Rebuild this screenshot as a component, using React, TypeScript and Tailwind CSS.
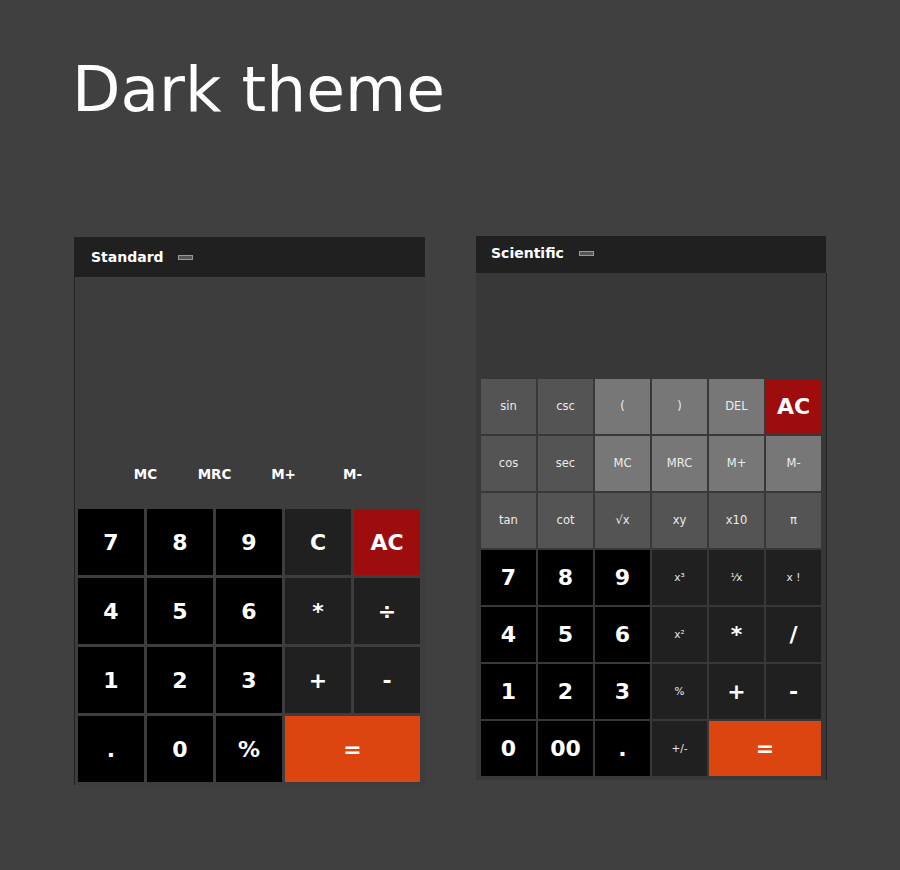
import React from "react";

const F = { fontFamily: '"DejaVu Sans", Verdana, sans-serif' };

function MinIcon() {
  return <span className="inline-block w-[15px] h-[5px] bg-[#555] border border-[#9a9a9a]" />;
}

type Btn = { t: string; c: string; k: "big" | "fn" | "sm"; span?: boolean };

function Standard() {
  const keys: Btn[] = [
    { t: "7", c: "bg-black", k: "big" },
    { t: "8", c: "bg-black", k: "big" },
    { t: "9", c: "bg-black", k: "big" },
    { t: "C", c: "bg-[#202020]", k: "big" },
    { t: "AC", c: "bg-[#9d0d0e]", k: "big" },
    { t: "4", c: "bg-black", k: "big" },
    { t: "5", c: "bg-black", k: "big" },
    { t: "6", c: "bg-black", k: "big" },
    { t: "*", c: "bg-[#202020]", k: "big" },
    { t: "÷", c: "bg-[#202020]", k: "big" },
    { t: "1", c: "bg-black", k: "big" },
    { t: "2", c: "bg-black", k: "big" },
    { t: "3", c: "bg-black", k: "big" },
    { t: "+", c: "bg-[#202020]", k: "big" },
    { t: "-", c: "bg-[#202020]", k: "big" },
    { t: ".", c: "bg-black", k: "big" },
    { t: "0", c: "bg-black", k: "big" },
    { t: "%", c: "bg-black", k: "big" },
    { t: "=", c: "bg-[#dc450f]", k: "big", span: true },
  ];
  return (
    <div className="w-[351px] mt-px flex flex-col">
      <div className="h-[40px] bg-[#202020] flex items-center pl-[17px] gap-[14px]">
        <span className="text-white font-bold text-[14px]">Standard</span>
        <MinIcon />
      </div>
      <div className="bg-[#3d3d3d] border-l border-[#222] pl-[3px] pb-[3px]">
        <div className="h-[177px]" />
        <div className="h-[40px] flex items-center pl-[33px]">
          {["MC", "MRC", "M+", "M-"].map((m) => (
            <span key={m} className="w-[69px] text-center text-white font-bold text-[13.5px]">
              {m}
            </span>
          ))}
        </div>
        <div className="mt-[15px] grid grid-cols-[repeat(5,66px)] auto-rows-[66px] gap-[3px]">
          {keys.map((b, i) => (
            <div
              key={i}
              className={`${b.c} ${b.span ? "col-span-2" : ""} flex items-center justify-center text-white font-bold text-[22px]`}
            >
              {b.t}
            </div>
          ))}
        </div>
      </div>
    </div>
  );
}

function Scientific() {
  const g1 = "bg-[#545454]";
  const g2 = "bg-[#777777]";
  const bk = "bg-black";
  const dk = "bg-[#202020]";
  const keys: Btn[] = [
    { t: "sin", c: g1, k: "fn" },
    { t: "csc", c: g1, k: "fn" },
    { t: "(", c: g2, k: "fn" },
    { t: ")", c: g2, k: "fn" },
    { t: "DEL", c: g2, k: "fn" },
    { t: "AC", c: "bg-[#9d0d0e]", k: "big" },
    { t: "cos", c: g1, k: "fn" },
    { t: "sec", c: g1, k: "fn" },
    { t: "MC", c: g2, k: "fn" },
    { t: "MRC", c: g2, k: "fn" },
    { t: "M+", c: g2, k: "fn" },
    { t: "M-", c: g2, k: "fn" },
    { t: "tan", c: g1, k: "fn" },
    { t: "cot", c: g1, k: "fn" },
    { t: "√x", c: g1, k: "fn" },
    { t: "xy", c: g1, k: "fn" },
    { t: "x10", c: g1, k: "fn" },
    { t: "π", c: g1, k: "fn" },
    { t: "7", c: bk, k: "big" },
    { t: "8", c: bk, k: "big" },
    { t: "9", c: bk, k: "big" },
    { t: "x³", c: dk, k: "sm" },
    { t: "¹⁄x", c: dk, k: "sm" },
    { t: "x !", c: dk, k: "sm" },
    { t: "4", c: bk, k: "big" },
    { t: "5", c: bk, k: "big" },
    { t: "6", c: bk, k: "big" },
    { t: "x²", c: dk, k: "sm" },
    { t: "*", c: dk, k: "big" },
    { t: "/", c: dk, k: "big" },
    { t: "1", c: bk, k: "big" },
    { t: "2", c: bk, k: "big" },
    { t: "3", c: bk, k: "big" },
    { t: "%", c: dk, k: "sm" },
    { t: "+", c: dk, k: "big" },
    { t: "-", c: dk, k: "big" },
    { t: "0", c: bk, k: "big" },
    { t: "00", c: bk, k: "big" },
    { t: ".", c: bk, k: "big" },
    { t: "+/-", c: dk, k: "sm" },
    { t: "=", c: "bg-[#dc450f]", k: "big", span: true },
  ];
  const cls = (k: Btn["k"]) =>
    k === "big"
      ? "text-white font-bold text-[22px]"
      : k === "fn"
      ? "text-[#ececec] text-[11.5px]"
      : "text-[#e8e8e8] text-[10.5px]";
  return (
    <div className="w-[351px] flex flex-col">
      <div className="h-[37px] w-[350px] bg-[#202020] flex items-center pl-[15px] pb-[2px] gap-[15px]">
        <span className="text-white font-bold text-[14px]">Scientific</span>
        <MinIcon />
      </div>
      <div className="bg-[#383838] border-r border-[#222] pl-[5px] pb-[4px]">
        <div className="h-[106px]" />
        <div className="grid grid-cols-[repeat(6,55px)] auto-rows-[55px] gap-[2px]">
          {keys.map((b, i) => (
            <div
              key={i}
              className={`${b.c} ${b.span ? "col-span-2" : ""} flex items-center justify-center ${cls(b.k)}`}
            >
              {b.t}
            </div>
          ))}
        </div>
      </div>
    </div>
  );
}

export default function App() {
  return (
    <div className="w-[900px] h-[870px] bg-[#404040] overflow-hidden" style={F}>
      <div className="pt-[58px] pl-[72px] h-[121px] text-white text-[63px] leading-none">Dark theme</div>
      <div className="mt-[115px] pl-[74px] flex items-start gap-[51px]">
        <Standard />
        <Scientific />
      </div>
    </div>
  );
}
